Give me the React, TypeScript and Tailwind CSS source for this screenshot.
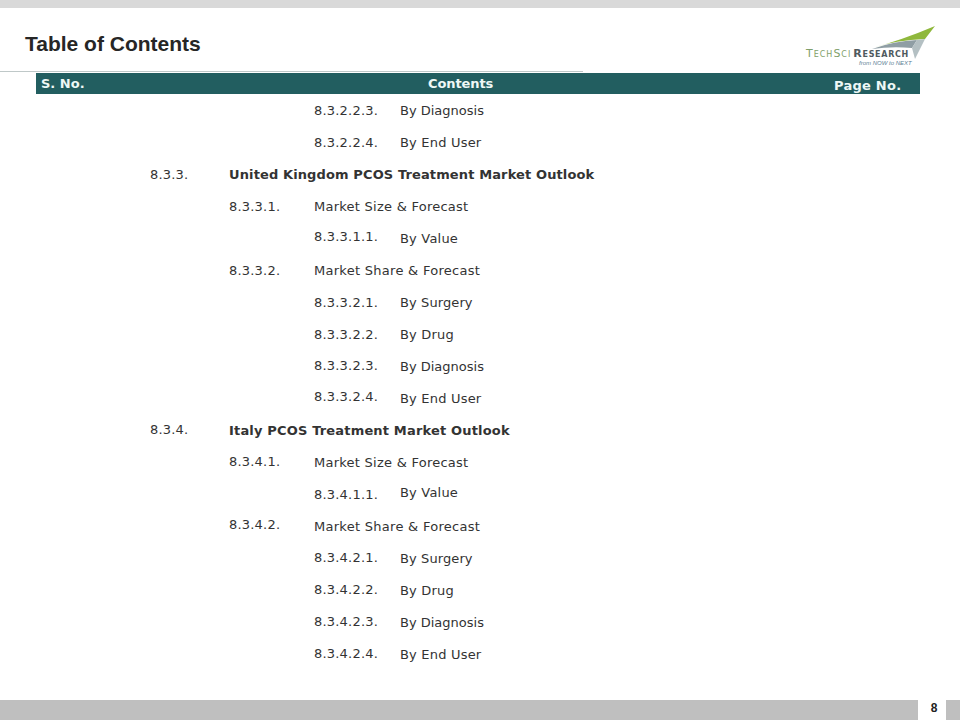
import React from 'react';

interface Row {
  level: 1 | 2 | 3;
  no: string;
  label: string;
  bold?: boolean;
  noShift?: string;
  labelClass?: string;
}

const rows: Row[] = [
  { level: 3, no: '8.3.2.2.3.', label: 'By Diagnosis', labelClass: 'tracking-[0px]' },
  { level: 3, no: '8.3.2.2.4.', label: 'By End User' },
  { level: 1, no: '8.3.3.', label: 'United Kingdom PCOS Treatment Market Outlook', bold: true, labelClass: 'tracking-[0.12px]' },
  { level: 2, no: '8.3.3.1.', label: 'Market Size & Forecast', labelClass: 'tracking-[0.25px]' },
  { level: 3, no: '8.3.3.1.1.', label: 'By Value', noShift: '-translate-y-0.5' },
  { level: 2, no: '8.3.3.2.', label: 'Market Share & Forecast', labelClass: 'tracking-[0.28px]' },
  { level: 3, no: '8.3.3.2.1.', label: 'By Surgery', labelClass: 'tracking-[0.1px]' },
  { level: 3, no: '8.3.3.2.2.', label: 'By Drug' },
  { level: 3, no: '8.3.3.2.3.', label: 'By Diagnosis', noShift: '-translate-y-px', labelClass: 'tracking-[0px]' },
  { level: 3, no: '8.3.3.2.4.', label: 'By End User', noShift: '-translate-y-0.5' },
  { level: 1, no: '8.3.4.', label: 'Italy PCOS Treatment Market Outlook', bold: true, noShift: '-translate-y-px', labelClass: 'tracking-[0.17px]' },
  { level: 2, no: '8.3.4.1.', label: 'Market Size & Forecast', noShift: '-translate-y-px', labelClass: 'tracking-[0.25px]' },
  { level: 3, no: '8.3.4.1.1.', label: 'By Value', labelClass: '-translate-y-0.5' },
  { level: 2, no: '8.3.4.2.', label: 'Market Share & Forecast', noShift: '-translate-y-0.5', labelClass: 'tracking-[0.28px]' },
  { level: 3, no: '8.3.4.2.1.', label: 'By Surgery', noShift: '-translate-y-px', labelClass: 'tracking-[0.1px]' },
  { level: 3, no: '8.3.4.2.2.', label: 'By Drug', noShift: '-translate-y-px' },
  { level: 3, no: '8.3.4.2.3.', label: 'By Diagnosis', noShift: '-translate-y-px', labelClass: 'tracking-[0px]' },
  { level: 3, no: '8.3.4.2.4.', label: 'By End User', noShift: '-translate-y-px' },
];

const Logo = () => (
  <div className="relative w-[132px] h-[52px]">
    <svg className="absolute inset-0" width="132" height="52" viewBox="0 0 132 52">
      <path d="M68 23 Q98 15 131 1 L121 14 Q92 15 68 23Z" fill="#8fb83c" />
      <path d="M68 24 Q90 16 113 15 L108 23 Q88 21 68 24Z" fill="#8f9ea4" />
      <path d="M113 15 L121 14 L111 34 L108 23Z" fill="#b4c0c3" />
    </svg>
    <div className="absolute left-[2px] top-[22px] whitespace-nowrap font-['DejaVu_Sans',sans-serif] text-[11px] leading-[14px] [font-variant:small-caps]">
      <span className="tracking-[1px] text-[#7f9f6a]">TechSci</span>
      <span className="ml-[2px] tracking-[0.7px] font-bold text-[#4f5a5e]">Research</span>
    </div>
    <div className="absolute left-[55px] top-[33px] whitespace-nowrap font-['Liberation_Sans',sans-serif] text-[6px] leading-[10px] italic text-[#5d7f95]">
      from NOW to NEXT
    </div>
  </div>
);

export default function App() {
  return (
    <div className="w-[960px] h-[720px] bg-white flex flex-col overflow-hidden font-['DejaVu_Sans',Verdana,sans-serif] text-[#333333]">
      <div className="h-2 bg-[#d9d9d9]" />

      {/* Title + logo */}
      <div className="h-[63px] flex justify-between pl-[25px] pr-[24px]">
        <h1 className="pt-6 font-['Liberation_Sans',sans-serif] text-[21px] leading-6 font-bold text-[#262626]">
          Table of Contents
        </h1>
        <div className="pt-[17px]">
          <Logo />
        </div>
      </div>
      <div className="h-px w-[583px] bg-[#bfc8c8]" />

      {/* Table head */}
      <div className="mt-px ml-9 w-[884px] h-[21px] bg-[#225e60] flex items-center text-[13px] font-bold text-[#eef8f6]">
        <span className="w-[392px] pl-[5px]">S. No.</span>
        <span className="w-[406px] -tracking-[0.1px]">Contents</span>
        <span className="translate-y-0.5 tracking-[0.25px]">Page No.</span>
      </div>

      {/* Rows */}
      <div className="mt-px flex flex-col text-[13px] leading-8 tracking-[0.2px] text-[#333333]">
        {rows.map((row) => (
          <div key={row.no} className="h-8 flex whitespace-pre">
            {row.level === 1 && (
              <>
                <span className={`ml-[150px] w-[79px] ${row.noShift ?? ''}`}>{row.no}</span>
                <span className={`font-bold ${row.labelClass ?? ''}`}>{row.label}</span>
              </>
            )}
            {row.level === 2 && (
              <>
                <span className={`ml-[229px] w-[85px] ${row.noShift ?? ''}`}>{row.no}</span>
                <span className={row.labelClass ?? ''}>{row.label}</span>
              </>
            )}
            {row.level === 3 && (
              <>
                <span className={`ml-[314px] w-[86px] ${row.noShift ?? ''}`}>{row.no}</span>
                <span className={row.labelClass ?? ''}>{row.label}</span>
              </>
            )}
          </div>
        ))}
      </div>

      {/* Footer bar */}
      <div className="mt-auto h-5 flex bg-[#bfbfbf]">
        <div className="ml-[918px] w-[28px] pl-1 pb-1 bg-white flex items-center justify-center font-['Liberation_Sans',sans-serif] text-xs font-bold text-[#222222]">
          8
        </div>
      </div>
    </div>
  );
}
